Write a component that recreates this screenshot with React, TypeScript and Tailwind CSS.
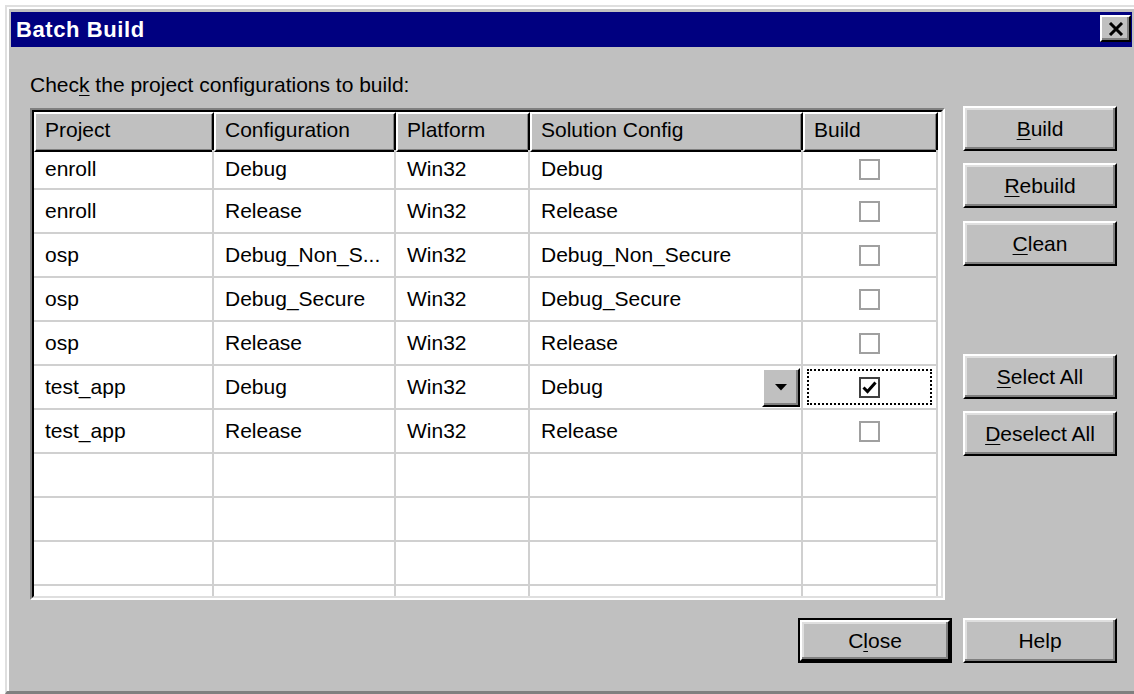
import { FC, ReactNode } from "react";
import clsx from "clsx";

type Row = { project: string; config: string; platform: string; solution: string; checked?: boolean; active?: boolean };

const rows: Row[] = [
    { project: "enroll", config: "Debug", platform: "Win32", solution: "Debug" },
    { project: "enroll", config: "Release", platform: "Win32", solution: "Release" },
    { project: "osp", config: "Debug_Non_S...", platform: "Win32", solution: "Debug_Non_Secure" },
    { project: "osp", config: "Debug_Secure", platform: "Win32", solution: "Debug_Secure" },
    { project: "osp", config: "Release", platform: "Win32", solution: "Release" },
    { project: "test_app", config: "Debug", platform: "Win32", solution: "Debug", checked: true, active: true },
    { project: "test_app", config: "Release", platform: "Win32", solution: "Release" },
];

const headers = ["Project", "Configuration", "Platform", "Solution Config", "Build"];

const Key: FC<{ children: ReactNode }> = ({ children }) => (
    <span className="underline decoration-1 underline-offset-[3px]">{children}</span>
);

// classic raised push button
const Button: FC<{ children: ReactNode; isDefault?: boolean; className?: string }> = ({ children, isDefault, className }) => {
    return <div className={clsx("w-[154px] h-[45px] bg-[#c0c0c0]", isDefault && "border-2 border-black", className)}>
        <div className="h-full flex items-center justify-center border-2 border-t-white border-l-white border-r-black border-b-black shadow-[inset_-2px_-2px_0_#808080,inset_2px_2px_0_#dfdfdf] text-[21px] text-black">
            {children}
        </div>
    </div>
};

const CheckBox: FC<{ checked?: boolean }> = ({ checked }) => {
    return <div className={clsx("w-[21px] h-[21px] bg-white border-2 flex items-center justify-center", checked ? "border-[#404040]" : "border-[#a0a0a0]")}>
        {checked && <svg width="15" height="13" viewBox="0 0 15 13">
            <path d="M1.5 6.5 L5.5 10.5 L13.5 1.5" fill="none" stroke="black" strokeWidth="3" />
        </svg>}
    </div>
};

const BatchBuild: FC = () => {
    const blanks = 4;
    return <div className="w-[1134px] h-[694px] bg-white pt-[5px] pl-[5px] overflow-hidden" style={{ fontFamily: '"Liberation Sans", Arial, sans-serif' }}>
        <div className="w-[1129px] h-[689px] bg-[#c0c0c0] border-t-2 border-l-2 border-[#dfdfdf] border-b-[3px] border-b-[#808080] shadow-[inset_2px_2px_0_#ffffff] pl-[4px] pr-[2px] pt-[5px]">
            {/* title bar */}
            <div className="h-[35px] bg-[#000080] flex items-center justify-between pl-[5px] pr-[1px]">
                <span className="text-white font-bold text-[22px] tracking-[0.6px]">Batch Build</span>
                <div className="w-[31px] h-[27px] bg-[#c0c0c0] border-2 border-t-white border-l-white border-r-black border-b-black shadow-[inset_-2px_-2px_0_#808080] flex items-center justify-center -mt-[2px]">
                    <svg width="16" height="14" viewBox="0 0 16 14">
                        <path d="M2 1 L14 13 M14 1 L2 13" stroke="black" strokeWidth="3" />
                    </svg>
                </div>
            </div>

            <div className="pl-[19px] pr-[15px]">
                <div className="mt-[26px] h-[24px] text-[21px] leading-[24px] text-black">
                    Chec<Key>k</Key> the project configurations to build:
                </div>

                <div className="flex gap-[18px] mt-[11px]">
                    {/* list view */}
                    <div className="w-[915px] h-[492px] border-2 border-t-[#808080] border-l-[#808080] border-r-white border-b-white">
                        <div className="h-full bg-white border-2 border-t-black border-l-black border-r-[#dfdfdf] border-b-[#dfdfdf] overflow-hidden">
                            <div className="grid grid-cols-[180px_182px_134px_273px_135px] h-[32px]">
                                {headers.map(h => (
                                    <div key={h} className="bg-[#c0c0c0] border-2 border-t-white border-l-white border-r-black border-b-black shadow-[inset_-1px_-1px_0_#808080] pl-[9px] pb-[4px] flex items-center text-[21px] text-black">
                                        {h}
                                    </div>
                                ))}
                            </div>
                            <div className="pt-[2px]">
                                {rows.map((r, i) => (
                                    <div key={i} className={clsx("grid grid-cols-[180px_182px_134px_273px_135px] h-[44px] text-[21px] text-black", i === 0 && "pt-[4px]")}>
                                        <div className="border-r-2 border-b-2 border-[#d0d0d0] pl-[11px] flex items-center">{r.project}</div>
                                        <div className="border-r-2 border-b-2 border-[#d0d0d0] pl-[11px] flex items-center">{r.config}</div>
                                        <div className="border-r-2 border-b-2 border-[#d0d0d0] pl-[11px] flex items-center">{r.platform}</div>
                                        <div className="border-r-2 border-b-2 border-[#d0d0d0] pl-[11px] pr-[1px] flex items-center justify-between">
                                            <span>{r.solution}</span>
                                            {r.active && <div className="w-[38px] h-[39px] bg-[#c0c0c0] border-2 border-t-white border-l-white border-r-black border-b-black shadow-[inset_-2px_-2px_0_#808080] flex items-center justify-center">
                                                <svg width="12" height="7" viewBox="0 0 12 7"><path d="M0 0 H12 L6 6.5 Z" fill="black" /></svg>
                                            </div>}
                                        </div>
                                        <div className="border-r-2 border-b-2 border-[#d0d0d0] flex items-center justify-center">
                                            {r.active
                                                ? <div className="w-[125px] h-[36px] border-2 border-dotted border-black flex items-center justify-center"><CheckBox checked={r.checked} /></div>
                                                : <CheckBox checked={r.checked} />}
                                        </div>
                                    </div>
                                ))}
                                {Array.from({ length: blanks }).map((_, i) => (
                                    <div key={"b" + i} className="grid grid-cols-[180px_182px_134px_273px_135px] h-[44px]">
                                        <div className="border-r-2 border-b-2 border-[#d0d0d0]" />
                                        <div className="border-r-2 border-b-2 border-[#d0d0d0]" />
                                        <div className="border-r-2 border-b-2 border-[#d0d0d0]" />
                                        <div className="border-r-2 border-b-2 border-[#d0d0d0]" />
                                        <div className="border-r-2 border-b-2 border-[#d0d0d0]" />
                                    </div>
                                ))}
                            </div>
                        </div>
                    </div>

                    {/* side buttons */}
                    <div className="flex flex-col -mt-[2px]">
                        <Button><Key>B</Key>uild</Button>
                        <Button className="mt-[12px]"><Key>R</Key>ebuild</Button>
                        <Button className="mt-[13px]"><Key>C</Key>lean</Button>
                        <Button className="mt-[88px]"><Key>S</Key>elect All</Button>
                        <Button className="mt-[12px]"><Key>D</Key>eselect All</Button>
                    </div>
                </div>

                <div className="flex justify-end gap-[11px] mt-[18px]">
                    <Button isDefault>C<Key>l</Key>ose</Button>
                    <Button>Help</Button>
                </div>
            </div>
        </div>
    </div>
};

export default function App() {
    return <BatchBuild />;
}
